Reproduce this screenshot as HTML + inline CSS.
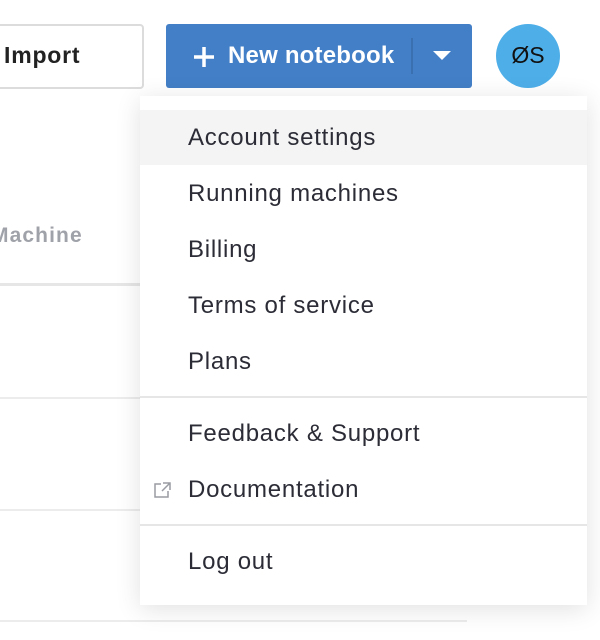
<!DOCTYPE html>
<html><head><style>
body{margin:0;width:600px;height:640px;background:#fff;font-family:"Liberation Sans",Arial,sans-serif;position:relative;overflow:hidden}
.a{position:absolute}
.item{position:absolute;left:188px;font-size:24px;letter-spacing:0.75px;color:#2b2c36;line-height:1;transform:translateY(-50%)}
</style></head><body>
<div class="a" style="left:-10px;top:24px;width:150px;height:61px;border:2px solid #dcdcdc;border-radius:4px"></div>
<div class="a" style="left:4px;top:42px;font-size:23px;font-weight:bold;color:#222;letter-spacing:0.8px">Import</div>
<div class="a" style="left:0;top:224px;font-size:21px;font-weight:bold;color:#a0a2aa;margin-left:-9px;letter-spacing:1.1px">Machine</div>
<div class="a" style="left:0;top:283px;width:150px;height:3px;background:#e6e6e6"></div>
<div class="a" style="left:0;top:397px;width:150px;height:2px;background:#ececec"></div>
<div class="a" style="left:0;top:509px;width:150px;height:2px;background:#ececec"></div>
<div class="a" style="left:0;top:620px;width:467px;height:2px;background:#ececec"></div>
<div class="a" style="left:166px;top:24px;width:306px;height:64px;background:#437fc7;border-radius:3px"></div>
<svg class="a" style="left:192px;top:45px" width="24" height="24"><path d="M12 2V22M2 12H22" stroke="#fff" stroke-width="3.5"/></svg>
<div class="a" style="left:228px;top:42px;font-size:24px;font-weight:bold;color:#fff;letter-spacing:0.2px">New notebook</div>
<div class="a" style="left:411px;top:38px;width:2px;height:36px;background:#3a6fb0"></div>
<svg class="a" style="left:433px;top:51px" width="18" height="10"><path d="M0 0H18L9 9Z" fill="#fff"/></svg>
<div class="a" style="left:496px;top:24px;width:64px;height:64px;border-radius:50%;background:#4eaee8"></div>
<div class="a" style="left:496px;top:42px;width:64px;text-align:center;font-size:23px;color:#111">ØS</div>
<div class="a" style="left:140px;top:96px;width:447px;height:509px;background:#fff;box-shadow:0 4px 24px rgba(0,0,0,0.12)"></div>
<div class="a" style="left:140px;top:110px;width:447px;height:55px;background:#f4f4f4"></div>
<div class="item" style="top:138px">Account settings</div>
<div class="item" style="top:194px">Running machines</div>
<div class="item" style="top:250px">Billing</div>
<div class="item" style="top:306px">Terms of service</div>
<div class="item" style="top:362px">Plans</div>
<div class="a" style="left:140px;top:396px;width:447px;height:2px;background:#e6e6e6"></div>
<div class="item" style="top:434px">Feedback &amp; Support</div>
<svg class="a" style="left:153px;top:481px" width="20" height="18"><path d="M8 3H2V16H15V10M10 2H17V9M17 2L9 10" stroke="#9a9ca4" stroke-width="1.5" fill="none"/></svg>
<div class="item" style="top:490px">Documentation</div>
<div class="a" style="left:140px;top:524px;width:447px;height:2px;background:#e6e6e6"></div>
<div class="item" style="top:562px">Log out</div>
</body></html>
